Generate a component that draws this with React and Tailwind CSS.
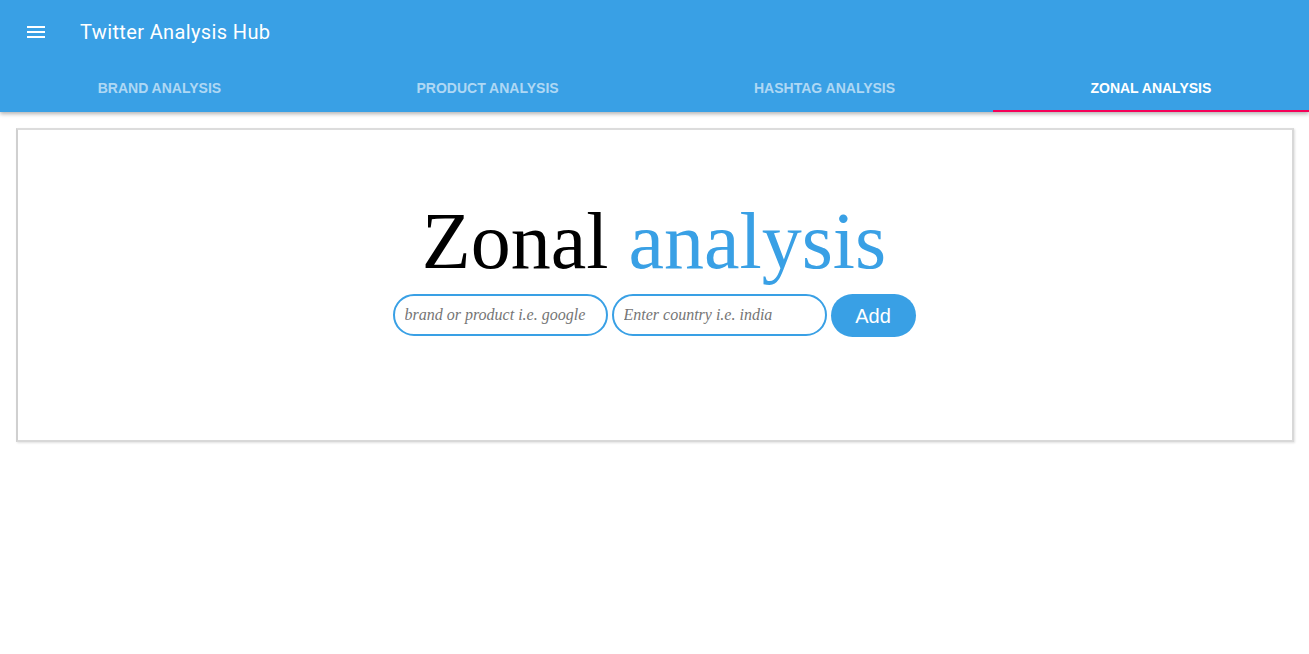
import React from 'react'

const tabs = ['Brand Analysis', 'Product Analysis', 'Hashtag Analysis', 'Zonal Analysis']

const MenuIcon = () => (
  <svg width="24" height="24" viewBox="0 0 24 24" className="fill-white">
    <path d="M3 18h18v-2H3v2zm0-5h18v-2H3v2zm0-7v2h18V6H3z" />
  </svg>
)

const App = () => {
  const active = 3
  return (
    <div className="min-h-[654px] bg-white font-['Roboto',sans-serif]">
      <header className="bg-[#39a0e5] shadow-[0_2px_4px_rgba(0,0,0,0.3)]">
        <div className="flex h-16 items-center px-6">
          <MenuIcon />
          <h1 className="ml-8 text-[20px] tracking-[0.37px] text-white">Twitter Analysis Hub</h1>
        </div>
        <div className="flex h-12">
          {tabs.map((t, i) => (
            <div
              key={t}
              className={
                'flex flex-auto items-center justify-center px-3 pt-[3px] font-["Liberation_Sans",sans-serif] text-[14px] font-bold uppercase ' +
                (i === active
                  ? 'border-b-2 border-[#f50057] text-white'
                  : 'border-b-2 border-transparent text-white/60')
              }
            >
              {t}
            </div>
          ))}
        </div>
      </header>

      <main className="px-4 pt-4 pr-[15px]">
        <div className="border-2 border-[#d8d8d8] border-t-[#dcdcdc] border-l-[#d0d0d0] bg-white shadow-[1px_1px_2px_rgba(0,0,0,0.12)] pt-[71px] pb-[103px] pr-[2px]">
          <h2 className="text-center font-['Liberation_Serif',serif] text-[80px] leading-none">
            <span className="text-black">Zonal </span>
            <span className="text-[#39a0e5]">analysis</span>
          </h2>
          <div className="mt-[13px] flex items-start justify-center gap-1">
            <input
              placeholder="brand or product i.e. google"
              className="h-[42px] w-[215px] rounded-full border-2 border-[#39a0e5] px-[10px] font-['Liberation_Serif',serif] text-[16px] italic outline-none placeholder:text-[#757575]"
            />
            <input
              placeholder="Enter country i.e. india"
              className="h-[42px] w-[215px] rounded-full border-2 border-[#39a0e5] px-[10px] font-['Liberation_Serif',serif] text-[16px] italic outline-none placeholder:text-[#757575]"
            />
            <button className="h-[43px] w-[85px] rounded-full bg-[#39a0e5] font-['Liberation_Sans',sans-serif] text-[20px] text-white">
              Add
            </button>
          </div>
        </div>
      </main>
    </div>
  )
}

export default App
